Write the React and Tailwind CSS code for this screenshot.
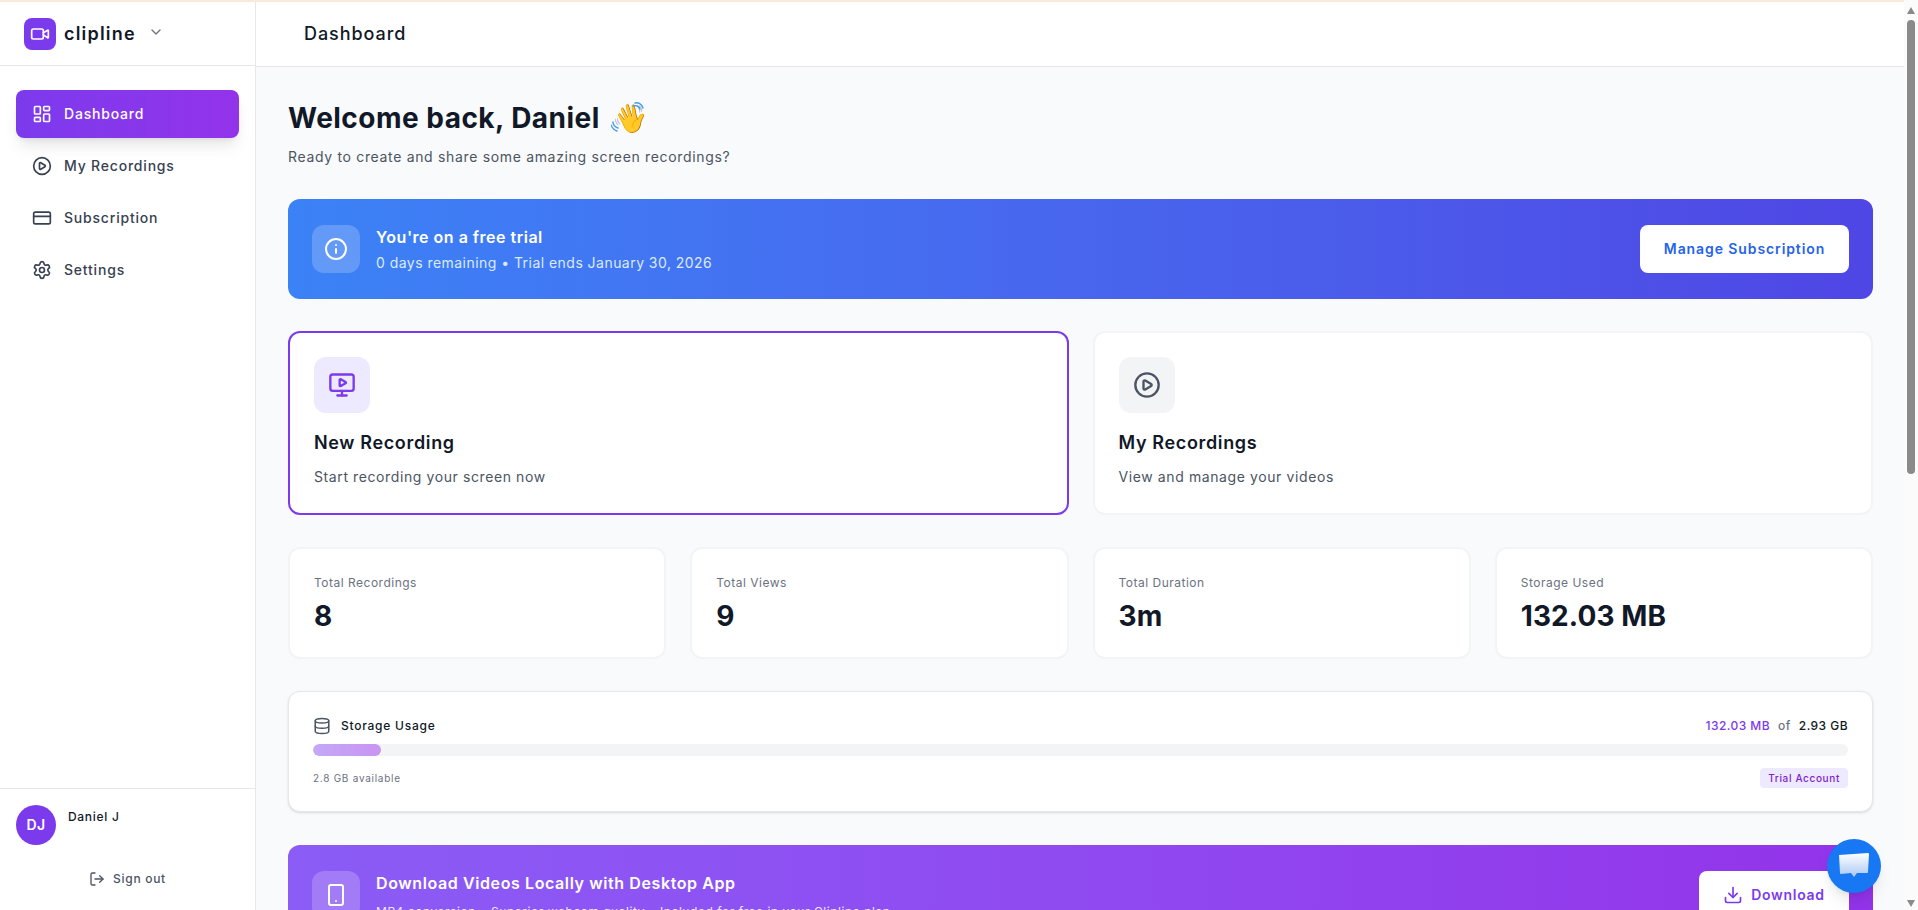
import React from "react";
import { LayoutDashboard, CirclePlay, CreditCard, Settings, Video, ChevronDown, LogOut, Info, MonitorPlay, Database, Smartphone, Download } from "lucide-react";

const font = "[font-family:Inter,'Liberation_Sans',sans-serif]";

function NavItem({ icon: Icon, label, active }) {
  return (
    <div className={active
      ? "h-12 flex items-center gap-3 px-4 rounded-lg text-white font-medium text-sm tracking-[0.8px] bg-gradient-to-r from-[#7c3aed] to-[#9333ea] shadow-lg"
      : "h-12 flex items-center gap-3 px-4 rounded-lg text-[#374151] font-medium text-sm tracking-[0.8px]"}>
      <Icon className="w-5 h-5 shrink-0" strokeWidth={2} />
      <span>{label}</span>
    </div>
  );
}

function Stat({ label, value }) {
  return (
    <div className="h-[112px] rounded-xl bg-white border-2 border-[#f3f4f6] px-6 pt-[26px]">
      <div className="text-xs text-[#6b7280] leading-4 tracking-[0.5px]">{label}</div>
      <div className="text-[28px] leading-9 font-bold text-[#111827] mt-[7px] tracking-[0.1px]">{value}</div>
    </div>
  );
}

function ActionCard({ icon: Icon, title, desc, active }) {
  return (
    <div className={active
      ? "h-[184px] rounded-xl bg-white border-2 border-[#7c3aed] p-6"
      : "h-[184px] rounded-xl bg-white border-2 border-[#f3f4f6] p-6"}>
      <div className={active
        ? "w-14 h-14 rounded-xl bg-[#ede9fe] flex items-center justify-center text-[#7c3aed]"
        : "w-14 h-14 rounded-xl bg-[#f3f4f6] flex items-center justify-center text-[#4b5563]"}>
        <Icon className="w-7 h-7" strokeWidth={2} />
      </div>
      <div className="mt-4 text-lg leading-7 font-semibold text-[#111827] tracking-[0.65px]">{title}</div>
      <div className="mt-[10px] text-sm leading-5 text-[#4b5563] tracking-[0.6px]">{desc}</div>
    </div>
  );
}

export default function App() {
  return (
    <div className={`relative h-screen w-full overflow-hidden flex bg-[#f9fafb] ${font}`}>
      <div className="absolute top-0 left-0 right-[14px] h-[2px] bg-[#fde8dc]" />
      <aside className="w-[256px] shrink-0 bg-white border-r border-[#e5e7eb] flex flex-col">
        <div className="h-[66px] shrink-0 border-b border-[#e5e7eb] pl-6 pt-[18px] flex items-start">
          <div className="w-8 h-8 rounded-lg bg-[#7c3aed] flex items-center justify-center text-white">
            <Video className="w-5 h-5" strokeWidth={2} />
          </div>
          <span className="ml-2 mt-0.5 text-lg leading-7 font-semibold text-[#111827] tracking-[1.2px]">clipline</span>
          <ChevronDown className="ml-3 mt-1.5 w-4 h-4 text-[#6b7280]" strokeWidth={2} />
        </div>
        <nav className="flex-1 px-4 pt-6 flex flex-col gap-1">
          <NavItem icon={LayoutDashboard} label="Dashboard" active />
          <NavItem icon={CirclePlay} label="My Recordings" />
          <NavItem icon={CreditCard} label="Subscription" />
          <NavItem icon={Settings} label="Settings" />
        </nav>
        <div className="h-[122px] shrink-0 border-t border-[#e5e7eb] px-4 pt-4">
          <div className="flex items-start gap-3">
            <div className="w-10 h-10 rounded-full bg-[#7c3aed] flex items-center justify-center text-white text-sm font-semibold tracking-[0.3px]">DJ</div>
            <div className="text-xs leading-4 font-medium text-[#111827] mt-1 tracking-[0.7px]">Daniel J</div>
          </div>
          <div className="mt-[24px] flex items-center justify-center gap-2 text-xs leading-5 font-medium text-[#4b5563] tracking-[0.7px]">
            <LogOut className="w-4 h-4" strokeWidth={2} />
            <span>Sign out</span>
          </div>
        </div>
      </aside>
      <main className="flex-1 min-w-0 flex flex-col">
        <header className="h-[67px] shrink-0 bg-white border-b border-[#e5e7eb] pl-[48px] pt-[2px] flex items-center">
          <span className="text-lg font-medium text-[#111827] tracking-[0.95px]">Dashboard</span>
        </header>
        <div className="flex-1 min-h-0 overflow-hidden pl-8 pr-[31px] pt-[33px]">
          <div className="flex items-center gap-[13px]">
            <h1 className="text-[28px] leading-9 font-bold text-[#111827] tracking-[0.48px]">Welcome back, Daniel</h1>
            <span className="relative text-[28px] leading-9">
              <span className="inline-block rotate-[14deg]">👋</span>
              <svg className="absolute -left-[2px] top-[2px] w-[36px] h-[34px]" viewBox="0 0 36 34" fill="none" stroke="#4a9be8" strokeWidth="1.4" strokeLinecap="round">
                <path d="M22 4c3-1 6 0 7 3" />
                <path d="M24 1c3-1 7 1 8 5" />
                <path d="M2 20c0 3 2 5 5 6" />
                <path d="M0 23c1 3 3 5 6 6" />
              </svg>
            </span>
          </div>
          <p className="mt-[11px] text-sm leading-5 text-[#4b5563] tracking-[0.67px]">Ready to create and share some amazing screen recordings?</p>

          <div className="mt-[32px] h-[100px] rounded-xl bg-gradient-to-r from-[#3b82f6] to-[#4f46e5] px-6 flex items-center justify-between">
            <div className="flex items-center gap-4">
              <div className="w-12 h-12 rounded-xl bg-white/20 flex items-center justify-center text-white">
                <Info className="w-6 h-6" strokeWidth={2} />
              </div>
              <div>
                <div className="text-base leading-6 font-semibold text-white tracking-[0.5px]">You're on a free trial</div>
                <div className="mt-1 text-sm leading-5 text-[#dbeafe] tracking-[0.46px]">0 days remaining • Trial ends January 30, 2026</div>
              </div>
            </div>
            <div className="w-[209px] h-12 rounded-lg bg-white flex items-center justify-center text-sm font-semibold text-[#2563eb] tracking-[0.9px]">Manage Subscription</div>
          </div>

          <div className="mt-8 grid grid-cols-2 gap-6">
            <ActionCard icon={MonitorPlay} title="New Recording" desc="Start recording your screen now" active />
            <ActionCard icon={CirclePlay} title="My Recordings" desc="View and manage your videos" />
          </div>

          <div className="mt-8 grid grid-cols-4 gap-6">
            <Stat label="Total Recordings" value="8" />
            <Stat label="Total Views" value="9" />
            <Stat label="Total Duration" value="3m" />
            <Stat label="Storage Used" value="132.03 MB" />
          </div>

          <div className="mt-8 h-[121px] rounded-xl bg-white border border-[#e5e7eb] shadow-sm px-6 pt-6">
            <div className="flex items-center justify-between h-5 text-xs font-medium">
              <div className="flex items-center gap-[10px] text-[#111827] tracking-[0.75px]">
                <Database className="w-[18px] h-[18px] text-[#4b5563]" strokeWidth={2} />
                <span>Storage Usage</span>
              </div>
              <div className="flex items-center gap-2 tracking-[0.45px]">
                <span className="text-[#7c3aed]">132.03 MB</span>
                <span className="text-[#6b7280]">of</span>
                <span className="text-[#111827]">2.93 GB</span>
              </div>
            </div>
            <div className="mt-2 h-3 rounded-full bg-[#f3f4f6] overflow-hidden">
              <div className="h-full w-[4.4%] rounded-full bg-gradient-to-r from-[#c4a8f7] to-[#c994f3]" />
            </div>
            <div className="mt-3 flex items-center justify-between">
              <span className="text-[10px] leading-4 text-[#6b7280] tracking-[0.73px]">2.8 GB available</span>
              <span className="h-5 px-2 rounded bg-[#ede9fe] flex items-center text-[10px] font-medium text-[#7e22ce] tracking-[0.65px]">Trial Account</span>
            </div>
          </div>

          <div className="mt-[33px] h-[140px] rounded-xl bg-gradient-to-r from-[#8b5cf6] to-[#9333ea] px-6 pt-[26px] flex items-start justify-between">
            <div className="flex items-start gap-4">
              <div className="w-12 h-12 rounded-xl bg-white/20 flex items-center justify-center text-white">
                <Smartphone className="w-6 h-6" strokeWidth={2} />
              </div>
              <div>
                <div className="text-base leading-6 font-semibold text-white tracking-[0.6px]">Download Videos Locally with Desktop App</div>
                <div className="mt-[9px] text-xs leading-4 text-[#ede9fe] tracking-[0.55px]">MP4 conversion • Superior webcam quality • Included for free in your Clipline plan</div>
              </div>
            </div>
            <div className="w-[150px] h-12 rounded-lg bg-white flex items-center justify-center gap-2 text-sm font-semibold text-[#7c3aed] tracking-[0.7px]">
              <Download className="w-5 h-5" strokeWidth={2} />
              <span>Download</span>
            </div>
          </div>
        </div>
      </main>
      <div className="w-[14px] shrink-0 bg-[#fbfbfb] flex flex-col items-start pl-[3px]">
        <svg className="mt-[7px] w-2 h-[7px]" viewBox="0 0 8 7"><path d="M4 0l4 7H0z" fill="#8a8a8a" /></svg>
        <div className="mt-[6px] w-2 h-[454px] rounded-full bg-[#8a8a8a]" />
        <div className="flex-1" />
        <svg className="mb-[3px] w-2 h-[7px]" viewBox="0 0 8 7"><path d="M4 7l4-7H0z" fill="#8a8a8a" /></svg>
      </div>
      <div className="absolute left-[1827px] top-[839px] w-[54px] h-[54px] rounded-full bg-[#1877f2] shadow-lg flex items-center justify-center">
        <svg width="32" height="30" viewBox="0 0 32 30">
          <defs>
            <linearGradient id="chatg" x1="0" y1="0" x2="0" y2="1">
              <stop offset="0" stopColor="#ffffff" />
              <stop offset="1" stopColor="#a9c8f5" />
            </linearGradient>
          </defs>
          <path d="M1 4 L30 2 Q31 2 31 3 L30 21 Q30 22 29 22 L19 22 L16 26 L13 22 L3 23 Q2 23 2 22 Z" fill="url(#chatg)" />
        </svg>
      </div>
    </div>
  );
}
